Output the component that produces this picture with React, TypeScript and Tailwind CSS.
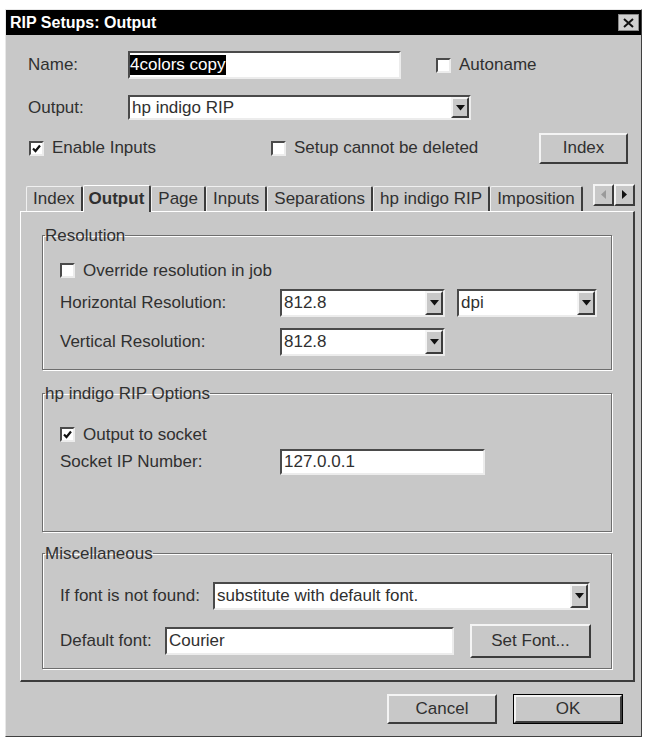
import { ReactNode } from 'react';

const sunken = 'border-2 border-t-[#4a4a4a] border-l-[#4a4a4a] border-r-[#ececec] border-b-[#ececec] bg-white';
const raised = 'border-2 border-t-[#f4f4f4] border-l-[#f4f4f4] border-r-[#3c3c3c] border-b-[#3c3c3c] bg-[#c8c8c8]';

function CheckBox({ checked }: { checked?: boolean }) {
  return (
    <span className={`${sunken} w-[15px] h-[15px] flex items-center justify-center shrink-0`}>
      {checked && (
        <svg width="9" height="9" viewBox="0 0 9 9">
          <path d="M1 4.5 L3.5 7 L8 1.5" stroke="#111" strokeWidth="2.2" fill="none" />
        </svg>
      )}
    </span>
  );
}

function Check({ checked, label, className = '' }: { checked?: boolean; label: string; className?: string }) {
  return (
    <div className={`flex items-center h-[20px] ${className}`}>
      <CheckBox checked={checked} />
      <span className="ml-[8px]">{label}</span>
    </div>
  );
}

function DownArrow() {
  return (
    <svg width="9" height="6" viewBox="0 0 9 6">
      <path d="M0 0 H9 L4.5 5.5 Z" fill="#111" />
    </svg>
  );
}

function Select({ value, className = '' }: { value: string; className?: string }) {
  return (
    <div className={`${sunken} flex items-stretch ${className}`}>
      <span className="flex-1 pl-[2px] flex items-center">{value}</span>
      <span className={`${raised} w-[18px] flex items-center justify-center`}>
        <DownArrow />
      </span>
    </div>
  );
}

function Button({ children, className = '' }: { children: ReactNode; className?: string }) {
  return <div className={`${raised} flex items-center justify-center ${className}`}>{children}</div>;
}

function Group({ title, children, className = '' }: { title: string; children: ReactNode; className?: string }) {
  return (
    <fieldset className={`border border-[#6e6e6e] shadow-[inset_1px_1px_0_#fff,1px_1px_0_#fff] px-0 pt-0 m-0 min-w-0 ${className}`}>
      <legend className="ml-[2px] px-0 leading-[20px]">{title}</legend>
      <div className="pl-[17px]">{children}</div>
    </fieldset>
  );
}

const tabs = ['Index', 'Output', 'Page', 'Inputs', 'Separations', 'hp indigo RIP', 'Imposition'];

export default function App() {
  return (
    <div className="w-[648px] h-[740px] bg-white pt-[9px] pl-[5px] font-['Liberation_Sans',Arial,sans-serif] text-[17px] text-[#303030]">
      <div className="w-[637px] h-[728px] bg-[#c8c8c8] border border-t-[#e8e8e8] border-l-[#e8e8e8] border-r-[#404040] border-b-[#404040] flex flex-col">
        {/* title bar */}
        <div className="h-[25px] bg-black flex items-center justify-between pl-[4px] pr-[2px]">
          <span className="text-white font-bold text-[16px]">RIP Setups: Output</span>
          <div className="w-[21px] h-[17px] bg-[#d0d0d0] border border-[#888] flex items-center justify-center">
            <svg width="11" height="10" viewBox="0 0 11 10">
              <path d="M1 1 L10 9 M10 1 L1 9" stroke="#111" strokeWidth="2" />
            </svg>
          </div>
        </div>

        {/* Name */}
        <div className="flex items-center mt-[16px] pl-[22px]">
          <span className="w-[100px]">Name:</span>
          <div className={`${sunken} w-[273px] h-[28px] flex items-center`}>
            <span className="bg-black text-white leading-[20px] pr-[1px]">4colors copy</span>
          </div>
          <Check label="Autoname" className="ml-[35px]" />
        </div>

        {/* Output */}
        <div className="flex items-center mt-[16px] pl-[22px]">
          <span className="w-[100px]">Output:</span>
          <Select value="hp indigo RIP" className="w-[343px] h-[25px]" />
        </div>

        {/* checkboxes + Index */}
        <div className="flex items-center mt-[12px] pl-[23px] pr-[13px]">
          <Check checked label="Enable Inputs" className="w-[242px]" />
          <Check label="Setup cannot be deleted" />
          <Button className="ml-auto w-[89px] h-[31px]">Index</Button>
        </div>

        {/* tabs */}
        <div className="mt-[20px] ml-[14px] mr-[6px] flex flex-col">
          <div className="flex items-end pl-[6px] h-[27px]">
            {tabs.map((t) =>
              t === 'Output' ? (
                <div
                  key={t}
                  className="relative z-10 -mb-px h-[27px] px-[5px] shrink-0 whitespace-nowrap flex items-center font-bold bg-[#c8c8c8] border-l border-t border-white border-r-2 border-r-[#3c3c3c] rounded-t-[2px]"
                >
                  {t}
                </div>
              ) : (
                <div
                  key={t}
                  className="h-[25px] px-[6px] shrink-0 whitespace-nowrap flex items-center border-l border-t border-[#f0f0f0] border-r-2 border-r-[#3c3c3c] rounded-t-[2px]"
                >
                  {t}
                </div>
              )
            )}
            <div className="ml-auto flex mb-[5px]">
              <div className={`${raised} w-[21px] h-[22px] flex items-center justify-center`}>
                <svg width="5" height="9" viewBox="0 0 5 9">
                  <path d="M5 0 V9 L0 4.5 Z" fill="#9a9a9a" />
                </svg>
              </div>
              <div className={`${raised} w-[21px] h-[22px] flex items-center justify-center`}>
                <svg width="5" height="9" viewBox="0 0 5 9">
                  <path d="M0 0 V9 L5 4.5 Z" fill="#111" />
                </svg>
              </div>
            </div>
          </div>

          {/* panel */}
          <div className="h-[471px] border-l border-t border-white border-r-2 border-b-2 border-r-[#3c3c3c] border-b-[#3c3c3c] pl-[21px] pr-[21px] pt-[14px] flex flex-col">
            <Group title="Resolution" className="pb-[13px]">
              <Check label="Override resolution in job" className="mt-[15px]" />
              <div className="flex items-center mt-[8px]">
                <span className="w-[220px]">Horizontal Resolution:</span>
                <Select value="812.8" className="w-[165px] h-[28px]" />
                <Select value="dpi" className="ml-[12px] w-[140px] h-[28px]" />
              </div>
              <div className="flex items-center mt-[11px]">
                <span className="w-[220px]">Vertical Resolution:</span>
                <Select value="812.8" className="w-[165px] h-[28px]" />
              </div>
            </Group>

            <Group title="hp indigo RIP Options" className="mt-[14px] pb-[56px]">
              <Check checked label="Output to socket" className="mt-[21px]" />
              <div className="flex items-center mt-[4px]">
                <span className="w-[220px]">Socket IP Number:</span>
                <div className={`${sunken} w-[205px] h-[26px] flex items-center pl-[2px]`}>127.0.0.1</div>
              </div>
            </Group>

            <Group title="Miscellaneous" className="mt-[12px] pb-[10px]">
              <div className="flex items-center mt-[18px]">
                <span className="w-[153px]">If font is not found:</span>
                <Select value="substitute with default font." className="w-[377px] h-[28px]" />
              </div>
              <div className="flex items-center mt-[14px]">
                <span className="w-[105px]">Default font:</span>
                <div className={`${sunken} w-[289px] h-[28px] flex items-center pl-[2px]`}>Courier</div>
                <Button className="ml-[16px] w-[121px] h-[34px]">Set Font...</Button>
              </div>
            </Group>
          </div>
        </div>

        {/* bottom buttons */}
        <div className="flex justify-end gap-[16px] mt-[12px] pr-[18px]">
          <Button className="w-[110px] h-[30px]">Cancel</Button>
          <div className="w-[110px] h-[30px] border border-black flex">
            <Button className="flex-1">OK</Button>
          </div>
        </div>
      </div>
    </div>
  );
}
